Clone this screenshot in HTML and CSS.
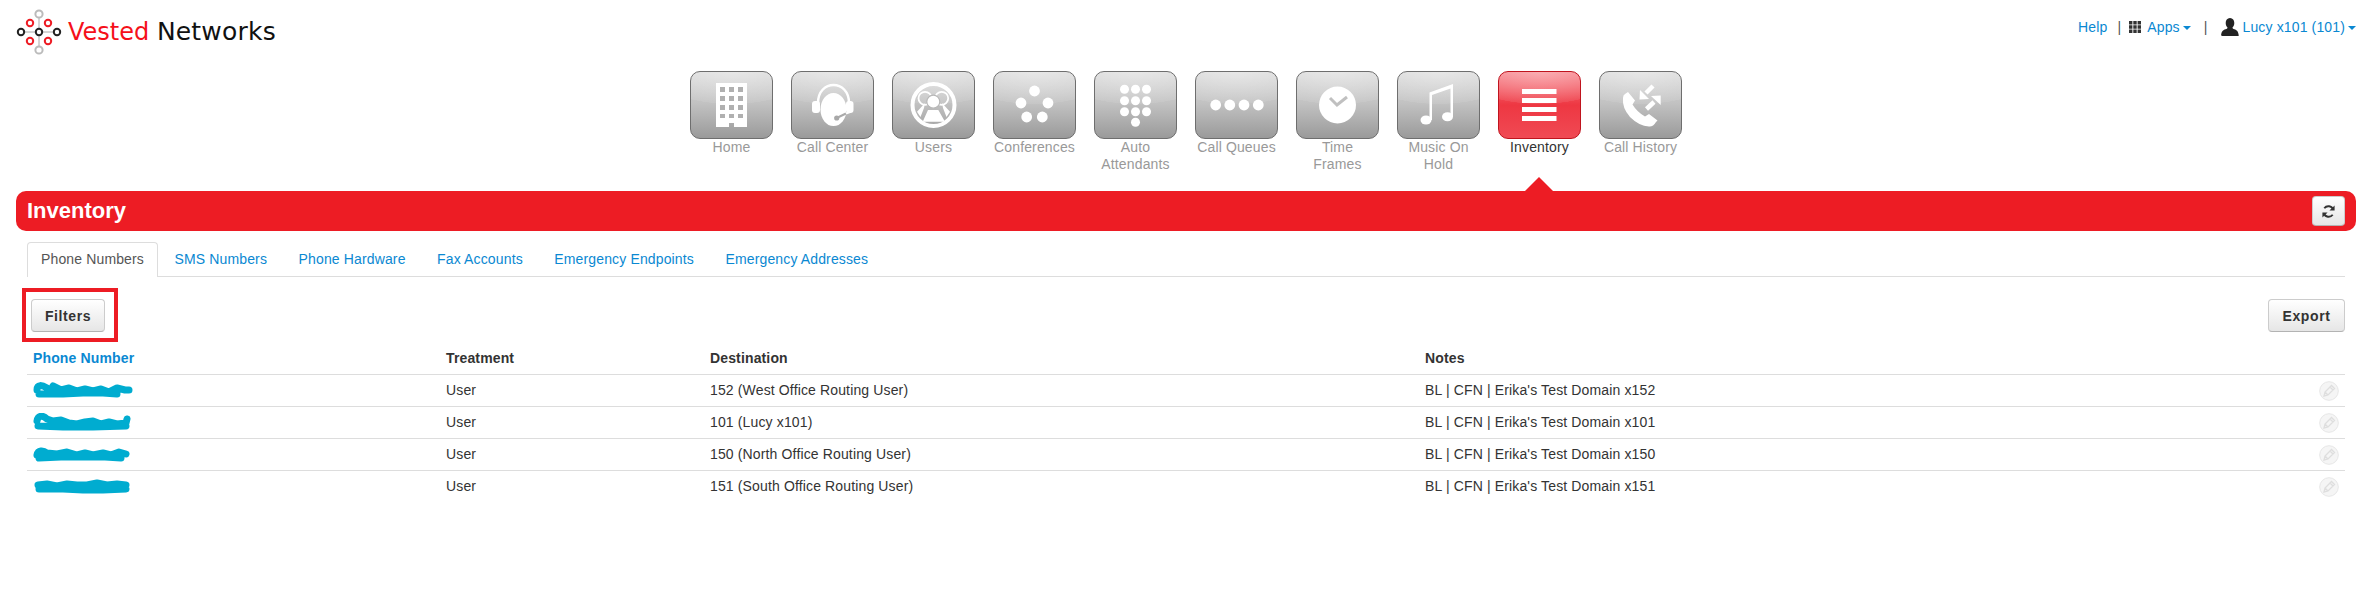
FILE: index.html
```html
<!DOCTYPE html>
<html lang="en">
<head>
<meta charset="utf-8">
<title>Inventory</title>
<link rel="stylesheet" href="styles.css">
</head>
<body>
<header class="topbar">
  <div class="logo">
    <svg class="logo-mark" viewBox="0 0 68 64" width="68" height="64">
      <path d="M21 32H57M39 14V50" stroke="#aaa" stroke-width="1" fill="none"/>
      <g fill="#fff" stroke-width="2">
        <g stroke="#bbb"><circle cx="39" cy="14" r="3.6"/><circle cx="39" cy="50" r="3.6"/></g>
        <g stroke="#ed1c24"><circle cx="30" cy="23" r="3.2"/><circle cx="48" cy="23" r="3.2"/><circle cx="30" cy="41" r="3.2"/><circle cx="48" cy="41" r="3.2"/></g>
        <g stroke="#222"><circle cx="21" cy="32" r="3.2"/><circle cx="39" cy="32" r="3.2"/><circle cx="57" cy="32" r="3.2"/></g>
      </g>
    </svg>
    <span class="logo-text"><span class="logo-red">Vested</span> <span class="logo-dark">Networks</span></span>
  </div>
  <nav class="usernav">
    <a href="#">Help</a>
    <span class="sep sep-a">|</span>
    <svg class="grid-icon" viewBox="0 0 12 12" width="12" height="12"><path fill="#333" d="M0 0h3.4v3.4H0zM4.3 0h3.4v3.4H4.3zM8.6 0H12v3.4H8.6zM0 4.3h3.4v3.4H0zM4.3 4.3h3.4v3.4H4.3zM8.6 4.3H12v3.4H8.6zM0 8.6h3.4V12H0zM4.3 8.6h3.4V12H4.3zM8.6 8.6H12V12H8.6z"/></svg>
    <a href="#" class="apps">Apps<i class="caret"></i></a>
    <span class="sep sep-b">|</span>
    <svg class="user-icon" viewBox="0 0 18 18" width="18" height="18"><path fill="#222" d="M9 0c2.800 0 4.300 2.200 4.300 5 0 2-.8 3.700-1.900 4.700.3.800.9 1.200 2 1.600 2.400.8 3.800 1.900 4.300 5.900 0 .4 0 .8-.2.800H1.300c-.7 0-1.300-.3-1.200-.9.500-3.900 1.900-5 4.400-5.800 1.200-.4 1.800-.8 2.100-1.600C5.500 8.700 4.700 7 4.700 5 4.700 2.200 6.200 0 9 0z"/></svg>
    <a href="#" class="user">Lucy x101 (101)<i class="caret"></i></a>
  </nav>
</header>

<nav class="apps-nav">
  <a class="app" href="#">
    <span class="tile"><svg viewBox="0 0 83 68"><path fill="#fff" d="M26 12h31v44H44v-4h-5v4H26z"/><path fill="#b0b0b0" d="M30 16h5v5h-5zM39 16h5v5h-5zM48 16h5v5h-5zM30 25h5v5h-5zM39 25h5v5h-5zM48 25h5v5h-5zM30 34h5v5h-5zM39 34h5v5h-5zM48 34h5v5h-5zM30 43h5v4h-5zM39 43h5v4h-5zM48 43h5v4h-5z"/></svg></span>
    <span class="label">Home</span>
  </a>
  <a class="app" href="#">
    <span class="tile"><svg viewBox="0 0 83 68"><path fill="none" stroke="#fff" stroke-width="2.500" d="M27 32C27 8 58 8 58 32"/><rect x="21" y="30" width="8" height="12" rx="3" fill="#fff"/><rect x="55" y="30" width="7.500" height="12" rx="3" fill="#fff"/><ellipse cx="42.500" cy="38.500" rx="13" ry="16.500" fill="#fff"/><path stroke="#aaa" stroke-width="2" fill="none" d="M45.700 47L55 42.500"/><path stroke="#fff" stroke-width="2" fill="none" d="M55 42.500L59 41"/><circle cx="45.700" cy="47" r="2.600" fill="#a8a8a8"/></svg></span>
    <span class="label">Call Center</span>
  </a>
  <a class="app" href="#">
    <span class="tile"><svg viewBox="0 0 83 68"><circle cx="41.500" cy="34" r="21" fill="none" stroke="#fff" stroke-width="4"/><g fill="none" stroke="#fff" stroke-width="1.800"><circle cx="33" cy="27.300" r="6.500"/><circle cx="49.700" cy="27.300" r="6.500"/></g><circle cx="41.300" cy="30.700" r="6.500" fill="#fff" stroke="#b8b8b8" stroke-width="1.200"/><path fill="#fff" d="M30.700 50.700L36 39h10.300L53 50.700zM25 40.700L33 32l-1 5-3.500 9zM58 40.700L50 32l1 5 3.500 9z"/></svg></span>
    <span class="label">Users</span>
  </a>
  <a class="app" href="#">
    <span class="tile"><svg viewBox="0 0 83 68"><g fill="#fff"><circle cx="41.500" cy="20" r="5.400"/><circle cx="28" cy="32" r="5.400"/><circle cx="55" cy="32" r="5.400"/><circle cx="33.700" cy="46" r="5.400"/><circle cx="49.300" cy="46" r="5.400"/></g></svg></span>
    <span class="label">Conferences</span>
  </a>
  <a class="app" href="#">
    <span class="tile"><svg viewBox="0 0 83 68"><g fill="#fff"><circle cx="30.500" cy="18.300" r="4.500"/><circle cx="41.500" cy="18.300" r="4.500"/><circle cx="52.500" cy="18.300" r="4.500"/><circle cx="30.500" cy="29.700" r="4.500"/><circle cx="41.500" cy="29.700" r="4.500"/><circle cx="52.500" cy="29.700" r="4.500"/><circle cx="30.500" cy="40.700" r="4.500"/><circle cx="41.500" cy="40.700" r="4.500"/><circle cx="52.500" cy="40.700" r="4.500"/><circle cx="41.500" cy="51.300" r="4.500"/></g></svg></span>
    <span class="label">Auto Attendants</span>
  </a>
  <a class="app" href="#">
    <span class="tile"><svg viewBox="0 0 83 68"><g fill="#fff"><circle cx="20.700" cy="34" r="5.400"/><circle cx="34.800" cy="34" r="5.400"/><circle cx="49" cy="34" r="5.400"/><circle cx="63.300" cy="34" r="5.400"/></g></svg></span>
    <span class="label">Call Queues</span>
  </a>
  <a class="app" href="#">
    <span class="tile"><svg viewBox="0 0 83 68"><circle cx="41.500" cy="34" r="18.500" fill="#fff"/><path d="M34 27l7 7 10-8" fill="none" stroke="#c0c0c0" stroke-width="3"/></svg></span>
    <span class="label">Time<br>Frames</span>
  </a>
  <a class="app" href="#">
    <span class="tile"><svg viewBox="0 0 83 68"><g fill="#fff"><ellipse cx="29" cy="49" rx="5.500" ry="4.500"/><ellipse cx="50.500" cy="45.700" rx="5.500" ry="4.500"/><path d="M32.500 49V21.500L56 13v33h-2.500V17.500L35 24v25z"/></g></svg></span>
    <span class="label">Music On Hold</span>
  </a>
  <a class="app app-active" href="#">
    <span class="tile"><svg viewBox="0 0 83 68"><path fill="#fff" d="M24 18h34.500v5H24zM24 27h34.500v5H24zM24 36h34.500v5H24zM24 45h34.500v5H24z"/></svg></span>
    <span class="label">Inventory</span>
  </a>
  <a class="app" href="#">
    <span class="tile"><svg viewBox="0 0 83 68"><path fill="#fff" d="M24 27Q23 37 31 46Q40 55 50 55.500Q54 56 57 51L58.500 49.500L50 43L46 45.500Q38 41 33.500 33.500L36 29.500L29 21L26 23Q24 24 24 27Z"/><path fill="none" stroke="#fff" stroke-width="4.500" d="M47 22L54 15"/><path fill="#fff" d="M40.500 28.500L41 19L50 28Z"/><path fill="none" stroke="#fff" stroke-width="4.500" d="M55 31L47.500 38"/><path fill="#fff" d="M61.700 24.500V34L52 25Z"/></svg></span>
    <span class="label">Call History</span>
  </a>
</nav>

<section class="titlebar">
  <h1>Inventory</h1>
  <button class="btn btn-refresh" type="button" aria-label="Refresh">
    <svg viewBox="0 0 16 16" width="15" height="15"><g fill="none" stroke="#333" stroke-width="2"><path d="M13 6A5.500 5.500 0 0 0 3.500 4.500"/><path d="M3 10a5.500 5.500 0 0 0 9.500 1.500"/></g><path fill="#333" d="M14.500 1.500V7H9zM1.500 14.500V9H7z"/></svg>
  </button>
</section>

<main class="content">
  <ul class="tabs">
    <li class="tab tab-active"><a href="#">Phone Numbers</a></li>
    <li class="tab"><a href="#">SMS Numbers</a></li>
    <li class="tab"><a href="#">Phone Hardware</a></li>
    <li class="tab"><a href="#">Fax Accounts</a></li>
    <li class="tab"><a href="#">Emergency Endpoints</a></li>
    <li class="tab"><a href="#">Emergency Addresses</a></li>
  </ul>

  <div class="toolbar">
    <div class="highlight"><button class="btn btn-action" type="button">Filters</button></div>
    <button class="btn btn-action btn-export" type="button">Export</button>
  </div>

  <table class="grid">
    <colgroup><col class="c1"><col class="c2"><col class="c3"><col class="c4"><col></colgroup>
    <thead>
      <tr><th class="sort">Phone Number</th><th>Treatment</th><th>Destination</th><th>Notes</th><th></th></tr>
    </thead>
    <tbody>
      <tr>
        <td><svg class="scribble" viewBox="0 0 100 18" width="100" height="18"><path d="M4 9C4 3 9 4 14 7L16 12 20 5 28 9 36 7 44 10 52 8 60 10 68 8 76 11 84 7 92 9 96 9M6 13L30 13 50 12 70 12 84 13" /></svg></td>
        <td>User</td><td>152 (West Office Routing User)</td><td>BL | CFN | Erika's Test Domain x152</td>
        <td class="act"><svg class="edit" viewBox="0 0 20 20" width="20" height="20"><circle cx="10" cy="10" r="9.300" fill="#f5f5f5" stroke="#e6e6e6"/><path fill="none" stroke="#dedede" stroke-width="1.300" d="M5 15l1-4 6.500-6.500 3 3L9 14zM11 6l3 3M6 11l3 3"/></svg></td>
      </tr>
      <tr>
        <td><svg class="scribble" viewBox="0 0 100 18" width="100" height="18"><path d="M4 8C5 2 10 2 14 6L20 8 28 7 36 10 44 11 52 9 60 8 68 11 76 9 84 11 93 10 94 6M5 13L30 14 60 14 93 13" /></svg></td>
        <td>User</td><td>101 (Lucy x101)</td><td>BL | CFN | Erika's Test Domain x101</td>
        <td class="act"><svg class="edit" viewBox="0 0 20 20" width="20" height="20"><circle cx="10" cy="10" r="9.300" fill="#f5f5f5" stroke="#e6e6e6"/><path fill="none" stroke="#dedede" stroke-width="1.300" d="M5 15l1-4 6.500-6.500 3 3L9 14zM11 6l3 3M6 11l3 3"/></svg></td>
      </tr>
      <tr>
        <td><svg class="scribble" viewBox="0 0 100 18" width="100" height="18"><path d="M4 10C5 5 10 5 14 8L24 9 34 7 44 10 52 8 60 10 70 8 78 10 86 7 93 9M6 13L28 12 50 12 72 12 88 13" /></svg></td>
        <td>User</td><td>150 (North Office Routing User)</td><td>BL | CFN | Erika's Test Domain x150</td>
        <td class="act"><svg class="edit" viewBox="0 0 20 20" width="20" height="20"><circle cx="10" cy="10" r="9.300" fill="#f5f5f5" stroke="#e6e6e6"/><path fill="none" stroke="#dedede" stroke-width="1.300" d="M5 15l1-4 6.500-6.500 3 3L9 14zM11 6l3 3M6 11l3 3"/></svg></td>
      </tr>
      <tr>
        <td><svg class="scribble" viewBox="0 0 100 18" width="100" height="18"><path d="M5 8L14 7 24 9 34 7 44 8 54 8 64 6 74 8 84 7 93 8M6 12L30 12 50 13 70 13 93 12" /></svg></td>
        <td>User</td><td>151 (South Office Routing User)</td><td>BL | CFN | Erika's Test Domain x151</td>
        <td class="act"><svg class="edit" viewBox="0 0 20 20" width="20" height="20"><circle cx="10" cy="10" r="9.300" fill="#f5f5f5" stroke="#e6e6e6"/><path fill="none" stroke="#dedede" stroke-width="1.300" d="M5 15l1-4 6.500-6.500 3 3L9 14zM11 6l3 3M6 11l3 3"/></svg></td>
      </tr>
    </tbody>
  </table>
</main>
</body>
</html>
```
FILE: styles.css
```css
* { box-sizing: border-box; }
html, body { margin: 0; padding: 0; }
body {
  background: #fff;
  color: #333;
  font-family: "Liberation Sans", Arial, sans-serif;
  font-size: 14px;
  line-height: 20px;
  letter-spacing: .14px;
}
a { color: #0a88d2; text-decoration: none; }

/* top bar */
.topbar {
  display: flex;
  justify-content: space-between;
  align-items: flex-start;
  height: 71px;
}
.logo { display: flex; align-items: flex-start; }
.logo-mark { display: block; flex: none; }
.logo-text {
  font-family: "DejaVu Sans", sans-serif;
  font-size: 24px;
  line-height: 30px;
  padding-top: 17px;
  letter-spacing: 0;
  white-space: nowrap;
}
.logo-red { color: #f5101a; }
.logo-dark { color: #111; font-size: 25px; letter-spacing: .2px; }

.usernav {
  display: flex;
  align-items: center;
  height: 20px;
  margin-top: 17px;
  padding-right: 14px;
}
.sep { color: #555; }
.sep-a { margin: 0 8px 0 10px; }
.sep-b { margin: 0 13px 0 13px; }
.grid-icon { margin-right: 6px; }
.user-icon { margin-right: 4px; }
.caret {
  display: inline-block;
  margin-left: 3px;
  vertical-align: middle;
  border-top: 4px solid #0a88d2;
  border-left: 4px solid transparent;
  border-right: 4px solid transparent;
}

/* application launcher */
.apps-nav {
  display: flex;
  justify-content: center;
  gap: 18px;
  height: 120px;
  padding-left: 2px;
}
.app {
  position: relative;
  display: block;
  width: 83px;
  text-align: center;
  color: #999;
  line-height: 17px;
}
.tile {
  display: block;
  width: 83px;
  height: 68px;
  border: 1px solid #6e6e6e;
  border-radius: 10px;
  overflow: hidden;
  background:
    radial-gradient(ellipse 78px 32px at 50% 0, rgba(255,255,255,.36) 0, rgba(255,255,255,.08) 99%, rgba(255,255,255,0) 100%),
    linear-gradient(#dadada, #c2c2c2 47%, #9a9a9a);
}
.tile svg { display: block; width: 83px; height: 68px; margin: -1px; }
.label { display: block; }
.app-active { color: #333; }
.app-active .tile {
  border-color: #c0141e;
  background:
    radial-gradient(ellipse 78px 32px at 50% 0, rgba(255,255,255,.36) 0, rgba(255,255,255,.08) 99%, rgba(255,255,255,0) 100%),
    linear-gradient(#f78088, #ee3742 50%, #f04a54);
}
.app-active::after {
  content: "";
  position: absolute;
  left: 27px;
  top: 106px;
  border-bottom: 14px solid #ed1c24;
  border-left: 14px solid transparent;
  border-right: 14px solid transparent;
}

/* page title */
.titlebar {
  display: flex;
  align-items: center;
  justify-content: space-between;
  height: 40px;
  margin: 0 14px 0 16px;
  padding: 0 11px;
  background: #ed1c24;
  border-radius: 10px;
}
.titlebar h1 {
  margin: 0;
  color: #fff;
  font-size: 22px;
  font-weight: bold;
  line-height: 30px;
  letter-spacing: 0;
}

/* buttons */
.btn {
  display: block;
  margin: 0;
  border: 1px solid #ccc;
  border-bottom-color: #b3b3b3;
  border-radius: 4px;
  background: linear-gradient(#fff, #e6e6e6);
  color: #333;
  font-family: inherit;
}
.btn-refresh {
  display: flex;
  align-items: center;
  justify-content: center;
  width: 33px;
  height: 30px;
  padding: 0;
}
.btn-action {
  height: 33px;
  width: 74px;
  padding: 0;
  font-size: 14px;
  font-weight: bold;
  letter-spacing: .6px;
}
.btn-export { width: 77px; margin-top: 11px; }

/* content */
.content { margin: 0 25px 0 27px; }
.tabs {
  display: flex;
  gap: 1.5px;
  list-style: none;
  margin: 11px 0 0;
  padding: 0;
  height: 35px;
  border-bottom: 1px solid #ddd;
}
.tab a {
  display: block;
  height: 35px;
  padding: 0 14px;
  border: 1px solid transparent;
  border-bottom: 0;
  line-height: 33px;
  white-space: nowrap;
}
.tab-active a {
  padding: 0 13px;
  border-color: #ddd;
  border-radius: 4px 4px 0 0;
  background: #fff;
  color: #555;
}

.toolbar {
  display: flex;
  justify-content: space-between;
  align-items: flex-start;
  margin: 11px 0 0 -5px;
  height: 54px;
}
.highlight {
  width: 96px;
  height: 54px;
  padding: 7px 5px;
  border: 4px solid #ed1c24;
}

.grid {
  width: 100%;
  table-layout: fixed;
  border-collapse: collapse;
}
.c1 { width: 413px; }
.c2 { width: 264px; }
.c3 { width: 715px; }
.c4 { width: 880px; }
.grid th, .grid td {
  height: 32px;
  padding: 0 6px;
  text-align: left;
  vertical-align: middle;
  white-space: nowrap;
  overflow: hidden;
}
.grid thead th { border-bottom: 1px solid #ddd; color: #333; }
.grid th.sort { color: #0a88d2; }
.grid tbody tr + tr td { border-top: 1px solid #ddd; }
.grid td.act { text-align: right; }
.edit { display: inline-block; vertical-align: middle; }
.scribble { display: block; }
.scribble path {
  fill: none;
  stroke: #00acd0;
  stroke-width: 7;
  stroke-linecap: round;
  stroke-linejoin: round;
}
```
